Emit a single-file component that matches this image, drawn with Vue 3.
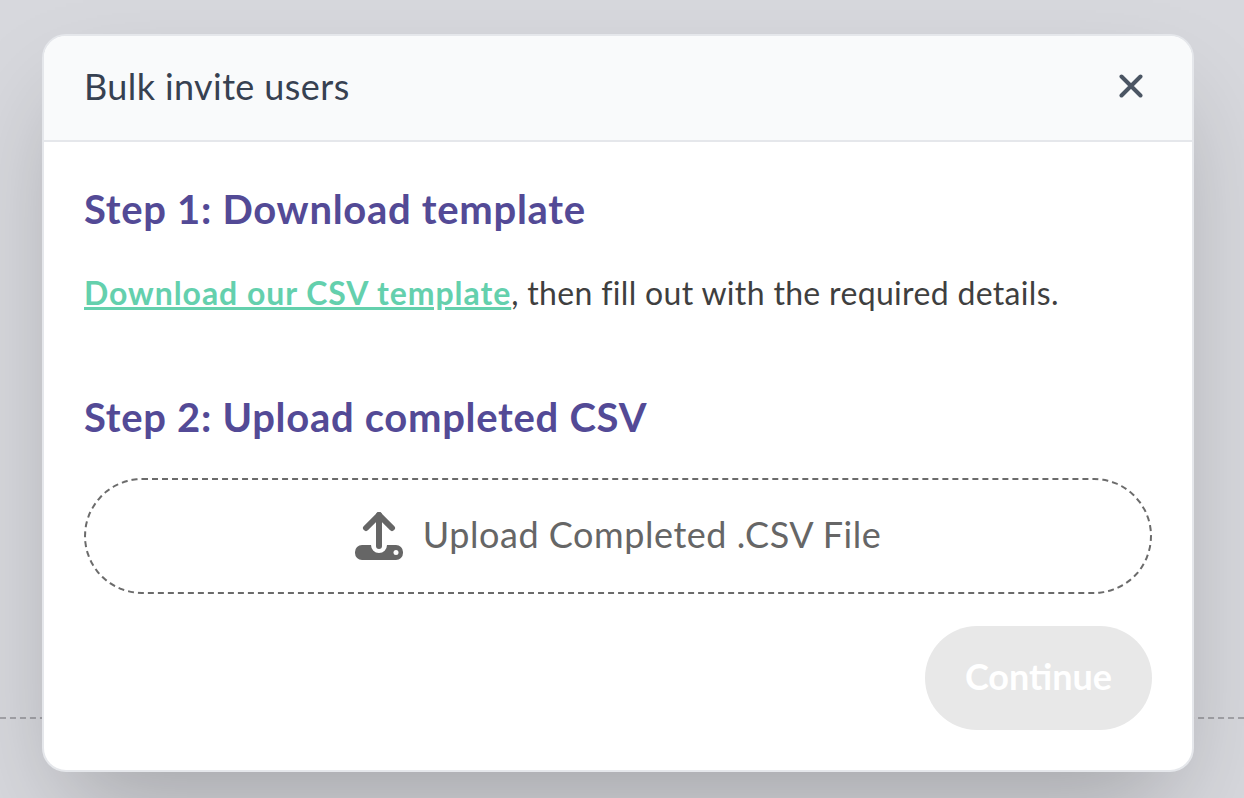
<script setup>
const title = 'Bulk invite users';
</script>

<template>
  <div class="page">
    <div class="bg-line"></div>
    <div class="overlay">
      <div class="modal">
        <header class="modal-header">
          <span class="modal-title">{{ title }}</span>
          <button class="close-btn" aria-label="Close">
            <svg width="24" height="24" viewBox="0 0 24 24" fill="none" stroke="#4b5563" stroke-width="4" stroke-linecap="round">
              <path d="M2.5 2.5 L21.5 21.5 M21.5 2.5 L2.5 21.5" />
            </svg>
          </button>
        </header>
        <div class="modal-body">
          <h2 class="step-title">Step 1: Download template</h2>
          <p class="step-text"><a class="link" href="#">Download our CSV template</a>, then fill out with the required details.</p>
          <h2 class="step-title second">Step 2: Upload completed CSV</h2>
          <div class="dropzone">
            <svg class="upload-icon" width="48" height="48" viewBox="0 0 48 48">
              <path d="M24 3 L24 34" stroke="#666" stroke-width="6" stroke-linecap="round" fill="none" />
              <path d="M11 16 L24 3 L37 16" stroke="#666" stroke-width="6" stroke-linecap="round" stroke-linejoin="round" fill="none" />
              <path d="M7 33 H16 A8 8 0 0 0 32 33 H41 A7 7 0 0 1 48 40 V41 A7 7 0 0 1 41 48 H7 A7 7 0 0 1 0 41 V40 A7 7 0 0 1 7 33 Z" fill="#666" />
              <circle cx="41" cy="40.5" r="2.5" fill="#fff" />
            </svg>
            <span class="upload-label">Upload Completed .CSV File</span>
          </div>
          <div class="actions">
            <button class="continue" disabled>Continue</button>
          </div>
        </div>
      </div>
    </div>
  </div>
</template>

<style>
html, body {
  margin: 0;
  background: #d7d8dd;
}
</style>

<style scoped>
.page {
  position: relative;
  width: 1244px;
  height: 798px;
  overflow: hidden;
  background: #d7d8dd;
  font-family: "Lato", "Noto Sans", sans-serif;
}
.bg-line {
  position: absolute;
  left: 0;
  right: 0;
  top: 717px;
  border-top: 2px dashed #a3a3a8;
}
.overlay {
  position: relative;
  padding: 34px 50px 26px 42px;
}
.modal {
  box-sizing: border-box;
  height: 738px;
  background: #fff;
  border: 2px solid #e5e7eb;
  border-radius: 24px;
  box-shadow: 0 50px 100px -24px rgba(0, 0, 0, 0.25);
  overflow: hidden;
}
.modal-header {
  box-sizing: border-box;
  height: 106px;
  display: flex;
  align-items: center;
  justify-content: space-between;
  padding: 0 49px 0 40px;
  background: #f9fafb;
  border-bottom: 2px solid #e5e7eb;
}
.modal-title {
  padding-bottom: 4px;
  font-size: 36px;
  letter-spacing: 0.4px;
  color: #374151;
}
.close-btn {
  display: flex;
  padding: 0 0 4px;
  border: 0;
  background: none;
}
.modal-body {
  padding: 39px 40px 0;
}
.step-title {
  margin: 0;
  font-size: 40px;
  line-height: 56px;
  font-weight: 700;
  letter-spacing: 0.7px;
  color: #534a96;
}
.second {
  margin-top: 75px;
}
.step-text {
  margin: 35px 0 0;
  font-size: 32px;
  line-height: 42px;
  letter-spacing: 0.33px;
  color: #3f3f3f;
}
.link {
  color: #64d0ad;
  font-weight: 700;
  letter-spacing: 0.94px;
  text-decoration: underline;
}
.dropzone {
  box-sizing: border-box;
  height: 116px;
  margin-top: 33px;
  display: flex;
  align-items: center;
  justify-content: center;
  gap: 20px;
  border: 2px dashed #6b6b6b;
  border-radius: 58px;
  font-size: 36px;
  letter-spacing: 0.55px;
  color: #666;
}
.upload-label {
  padding-bottom: 4px;
}
.actions {
  display: flex;
  justify-content: flex-end;
  margin-top: 32px;
}
.continue {
  width: 227px;
  height: 104px;
  padding: 0 0 4px;
  border: 0;
  border-radius: 52px;
  background: #e8e8e8;
  color: #fff;
  font-family: inherit;
  font-size: 36px;
  font-weight: 700;
}
</style>
